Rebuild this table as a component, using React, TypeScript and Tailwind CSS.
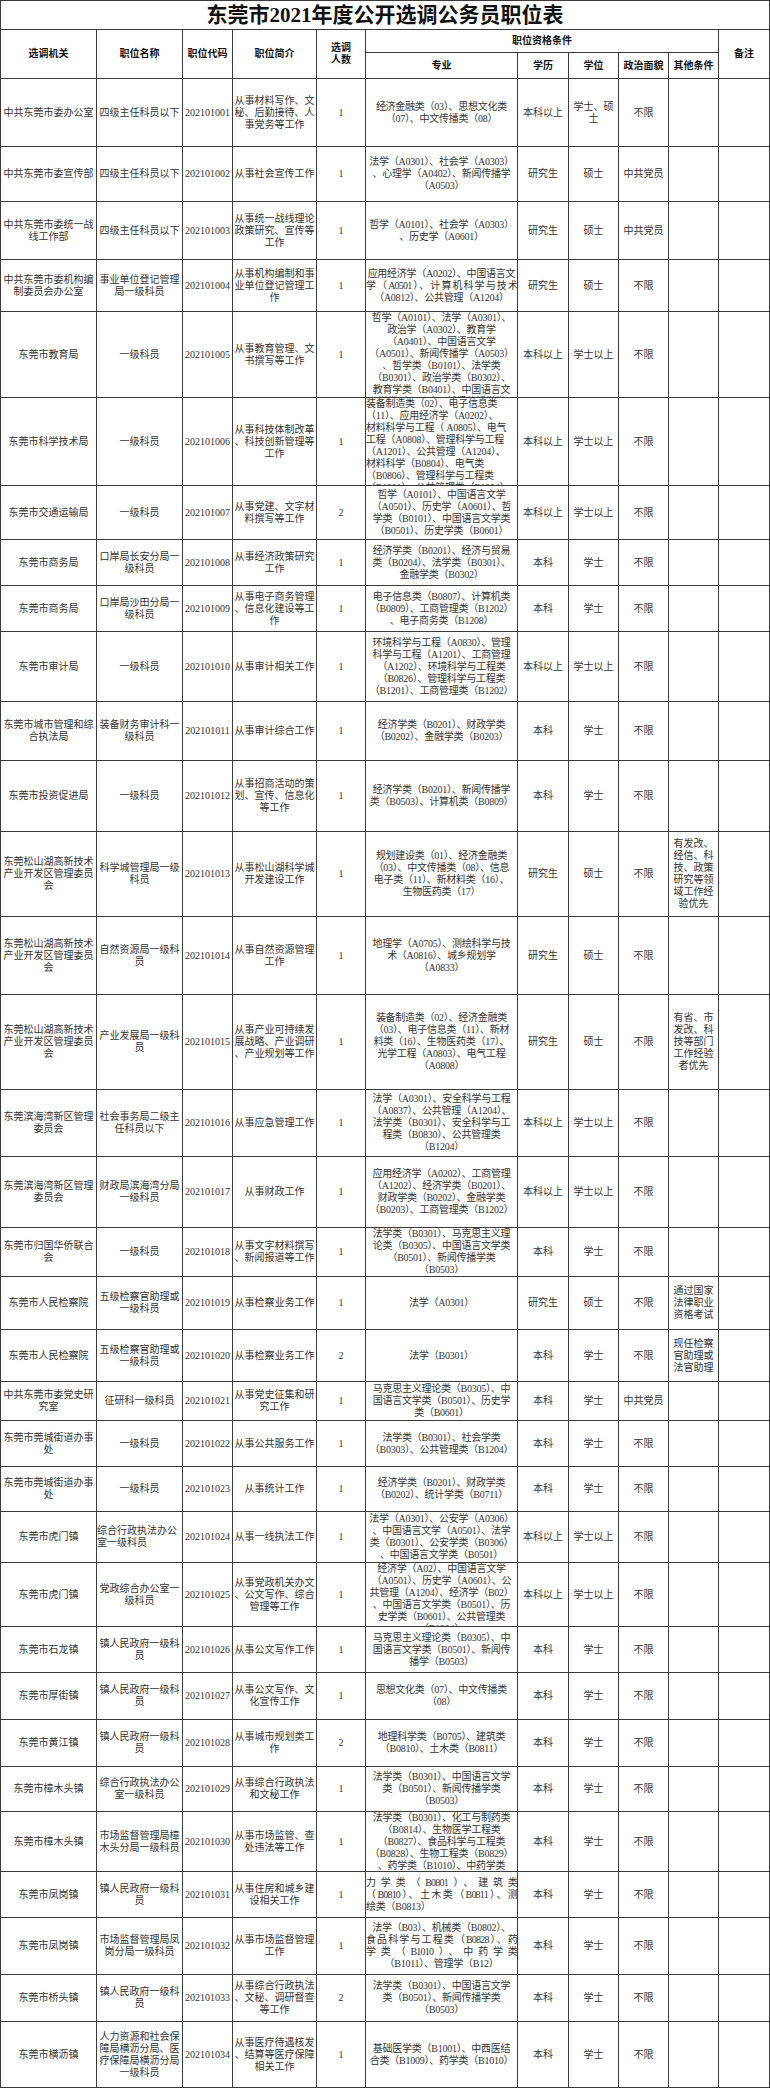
import clsx from "clsx";

const GRID =
  "grid grid-cols-[96px_86px_50px_84px_49px_152px_51px_50px_50px_50px_51px]";

type Row = { h: string; c: string[]; left?: number[] };

// "\n" splits lines, a leading "~" marks a justified line
const rows: Row[] = [
  { h: "h-[68px]", c: ["中共东莞市委办公室", "四级主任科员以下", "202101001", "从事材料写作、文\n秘、后勤接待、人\n事党务等工作", "1", "经济金融类（03）、思想文化类\n（07）、中文传播类（08）", "本科以上", "学士、硕\n士", "不限", "", ""] },
  { h: "h-[55px]", c: ["中共东莞市委宣传部", "四级主任科员以下", "202101002", "从事社会宣传工作", "1", "法学（A0301）、社会学（A0303）\n、心理学（A0402）、新闻传播学\n（A0503）", "研究生", "硕士", "中共党员", "", ""] },
  { h: "h-[58px]", c: ["中共东莞市委统一战\n线工作部", "四级主任科员以下", "202101003", "从事统一战线理论\n政策研究、宣传等\n工作", "1", "哲学（A0101）、社会学（A0303）\n、历史学（A0601）", "研究生", "硕士", "中共党员", "", ""] },
  { h: "h-[52px]", c: ["中共东莞市委机构编\n制委员会办公室", "事业单位登记管理\n局一级科员", "202101004", "从事机构编制和事\n业单位登记管理工\n作", "1", "应用经济学（A0202）、中国语言文\n~学（A0501）、计算机科学与技术\n（A0812）、公共管理（A1204）", "研究生", "硕士", "不限", "", ""] },
  { h: "h-[86px]", c: ["东莞市教育局", "一级科员", "202101005", "从事教育管理、文\n书撰写等工作", "1", "哲学（A0101）、法学（A0301）、\n政治学（A0302）、教育学\n（A0401）、中国语言文学\n（A0501）、新闻传播学（A0503）\n、哲学类（B0101）、法学类\n（B0301）、政治学类（B0302）、\n教育学类（B0401）、中国语言文\n学类（B0501）、新闻传播学类", "本科以上", "学士以上", "不限", "", ""] },
  { h: "h-[88px]", left: [5], c: ["东莞市科学技术局", "一级科员", "202101006", "从事科技体制改革\n、科技创新管理等\n工作", "1", "装备制造类（02）、电子信息类\n（11）、应用经济学（A0202）、\n材料科学与工程（ A0805）、电气\n工程（A0808）、管理科学与工程\n（A1201）、公共管理（A1204）、\n材料科学（B0804）、电气类\n（B0806）、管理科学与工程类\n（B1201）、公共管理类（B1204）", "本科以上", "学士以上", "不限", "", ""] },
  { h: "h-[54px]", c: ["东莞市交通运输局", "一级科员", "202101007", "从事党建、文字材\n料撰写等工作", "2", "哲学（A0101）、中国语言文学\n（A0501）、历史学（A0601）、哲\n学类（B0101）、中国语言文学类\n（B0501）、历史学类（B0601）", "本科以上", "学士以上", "不限", "", ""] },
  { h: "h-[46px]", c: ["东莞市商务局", "口岸局长安分局一\n级科员", "202101008", "从事经济政策研究\n工作", "1", "经济学类（B0201）、经济与贸易\n类（B0204）、法学类（B0301）、\n金融学类（B0302）", "本科", "学士", "不限", "", ""] },
  { h: "h-[46px]", c: ["东莞市商务局", "口岸局沙田分局一\n级科员", "202101009", "从事电子商务管理\n、信息化建设等工\n作", "1", "电子信息类（B0807）、计算机类\n（B0809）、工商管理类（B1202）\n、电子商务类（B1208）", "本科", "学士", "不限", "", ""] },
  { h: "h-[70px]", c: ["东莞市审计局", "一级科员", "202101010", "从事审计相关工作", "1", "环境科学与工程（A0830）、管理\n科学与工程（A1201）、工商管理\n（A1202）、环境科学与工程类\n（B0826）、管理科学与工程类\n（B1201）、工商管理类（B1202）", "本科以上", "学士以上", "不限", "", ""] },
  { h: "h-[59px]", c: ["东莞市城市管理和综\n合执法局", "装备财务审计科一\n级科员", "202101011", "从事审计综合工作", "1", "经济学类（B0201）、财政学类\n（B0202）、金融学类（B0203）", "本科", "学士", "不限", "", ""] },
  { h: "h-[71px]", c: ["东莞市投资促进局", "一级科员", "202101012", "从事招商活动的策\n划、宣传、信息化\n等工作", "1", "经济学类（B0201）、新闻传播学\n类（B0503）、计算机类（B0809）", "本科", "学士", "不限", "", ""] },
  { h: "h-[85px]", c: ["东莞松山湖高新技术\n产业开发区管理委员\n会", "科学城管理局一级\n科员", "202101013", "从事松山湖科学城\n开发建设工作", "1", "规划建设类（01）、经济金融类\n（03）、中文传播类（08）、信息\n电子类（11）、新材料类（16）、\n生物医药类（17）", "研究生", "硕士", "不限", "有发改、\n经信、科\n技、政策\n研究等领\n域工作经\n验优先", ""] },
  { h: "h-[78px]", c: ["东莞松山湖高新技术\n产业开发区管理委员\n会", "自然资源局一级科\n员", "202101014", "从事自然资源管理\n工作", "1", "地理学（A0705）、测绘科学与技\n术（A0816）、城乡规划学\n（A0833）", "研究生", "硕士", "不限", "", ""] },
  { h: "h-[95px]", c: ["东莞松山湖高新技术\n产业开发区管理委员\n会", "产业发展局一级科\n员", "202101015", "从事产业可持续发\n展战略、产业调研\n、产业规划等工作", "1", "装备制造类（02）、经济金融类\n（03）、电子信息类（11）、新材\n料类（16）、生物医药类（17）、\n光学工程（A0803）、电气工程\n（A0808）", "研究生", "硕士", "不限", "有省、市\n发改、科\n技等部门\n工作经验\n者优先", ""] },
  { h: "h-[67px]", c: ["东莞滨海湾新区管理\n委员会", "社会事务局二级主\n任科员以下", "202101016", "从事应急管理工作", "1", "法学（A0301）、安全科学与工程\n（A0837）、公共管理（A1204）、\n法学类（B0301）、安全科学与工\n程类（B0830）、公共管理类\n（B1204）", "本科以上", "学士以上", "不限", "", ""] },
  { h: "h-[71px]", c: ["东莞滨海湾新区管理\n委员会", "财政局滨海湾分局\n一级科员", "202101017", "从事财政工作", "1", "应用经济学（A0202）、工商管理\n（A1202）、经济学类（B0201）、\n财政学类（B0202）、金融学类\n（B0203）、工商管理类（B1202）", "本科以上", "学士以上", "不限", "", ""] },
  { h: "h-[49px]", c: ["东莞市归国华侨联合\n会", "一级科员", "202101018", "从事文字材料撰写\n、新闻报道等工作", "1", "法学类（B0301）、马克思主义理\n论类（B0305）、中国语言文学类\n（B0501）、新闻传播学类\n（B0503）", "本科", "学士", "不限", "", ""] },
  { h: "h-[53px]", c: ["东莞市人民检察院", "五级检察官助理或\n一级科员", "202101019", "从事检察业务工作", "1", "法学（A0301）", "研究生", "硕士", "不限", "通过国家\n法律职业\n资格考试", ""] },
  { h: "h-[52px]", c: ["东莞市人民检察院", "五级检察官助理或\n一级科员", "202101020", "从事检察业务工作", "2", "法学（B0301）", "本科", "学士", "不限", "现任检察\n官助理或\n法官助理", ""] },
  { h: "h-[39px]", c: ["中共东莞市委党史研\n究室", "征研科一级科员", "202101021", "从事党史征集和研\n究工作", "1", "马克思主义理论类（B0305）、中\n国语言文学类（B0501）、历史学\n类（B0601）", "本科", "学士", "中共党员", "", ""] },
  { h: "h-[46px]", c: ["东莞市莞城街道办事\n处", "一级科员", "202101022", "从事公共服务工作", "1", "法学类（B0301）、社会学类\n（B0303）、公共管理类（B1204）", "本科", "学士", "不限", "", ""] },
  { h: "h-[45px]", c: ["东莞市莞城街道办事\n处", "一级科员", "202101023", "从事统计工作", "1", "经济学类（B0201）、财政学类\n（B0202）、统计学类（B0711）", "本科", "学士", "不限", "", ""] },
  { h: "h-[51px]", left: [1], c: ["东莞市虎门镇", "综合行政执法办公\n室一级科员", "202101024", "从事一线执法工作", "1", "法学（A0301）、公安学（A0306）\n、中国语言文学（A0501）、法学\n类（B0301）、公安学类（B0306）\n、中国语言文学类（B0501）", "本科以上", "学士以上", "不限", "", ""] },
  { h: "h-[64px]", c: ["东莞市虎门镇", "党政综合办公室一\n级科员", "202101025", "从事党政机关办文\n、公文写作、综合\n管理等工作", "1", "经济学（A02）、中国语言文学\n（A0501）、历史学（A0601）、公\n共管理（A1204）、经济学（B02）\n、中国语言文学类（B0501）、历\n史学类（B0601）、公共管理类\n（B1204）", "本科以上", "学士以上", "不限", "", ""] },
  { h: "h-[46px]", c: ["东莞市石龙镇", "镇人民政府一级科\n员", "202101026", "从事公文写作工作", "1", "马克思主义理论类（B0305）、中\n国语言文学类（B0501）、新闻传\n播学（B0503）", "本科", "学士", "不限", "", ""] },
  { h: "h-[47px]", c: ["东莞市厚街镇", "镇人民政府一级科\n员", "202101027", "从事公文写作、文\n化宣传工作", "1", "思想文化类（07）、中文传播类\n（08）", "本科", "学士", "不限", "", ""] },
  { h: "h-[47px]", c: ["东莞市黄江镇", "镇人民政府一级科\n员", "202101028", "从事城市规划类工\n作", "2", "地理科学类（B0705）、建筑类\n（B0810）、土木类（B0811）", "本科", "学士", "不限", "", ""] },
  { h: "h-[45px]", c: ["东莞市樟木头镇", "综合行政执法办公\n室一级科员", "202101029", "从事综合行政执法\n和文秘工作", "1", "法学类（B0301）、中国语言文学\n类（B0501）、新闻传播学类\n（B0503）", "本科", "学士", "不限", "", ""] },
  { h: "h-[60px]", c: ["东莞市樟木头镇", "市场监督管理局樟\n木头分局一级科员", "202101030", "从事市场监管、查\n处违法等工作", "1", "法学类（B0301）、化工与制药类\n（B0814）、生物医学工程类\n（B0827）、食品科学与工程类\n（B0828）、生物工程类（B0829）\n、药学类（B1010）、中药学类\n（B1011）", "本科", "学士", "不限", "", ""] },
  { h: "h-[46px]", left: [5], c: ["东莞市凤岗镇", "镇人民政府一级科\n员", "202101031", "从事住房和城乡建\n设相关工作", "1", "~力学类（B0801）、建筑类\n~（B0810）、土木类（B0811）、测\n绘类（B0813）", "本科", "学士", "不限", "", ""] },
  { h: "h-[57px]", c: ["东莞市凤岗镇", "市场监督管理局凤\n岗分局一级科员", "202101032", "从事市场监督管理\n工作", "1", "法学（B03）、机械类（B0802）、\n~食品科学与工程类（B0828）、药\n~学类（B1010）、中药学类\n（B1011）、管理学（B12）", "本科", "学士", "不限", "", ""] },
  { h: "h-[47px]", c: ["东莞市桥头镇", "镇人民政府一级科\n员", "202101033", "从事综合行政执法\n、文秘、调研督查\n等工作", "2", "法学类（B0301）、中国语言文学\n类（B0501）、新闻传播学类\n（B0503）", "本科", "学士", "不限", "", ""] },
  { h: "h-[66px]", c: ["东莞市横沥镇", "人力资源和社会保\n障局横沥分局、医\n疗保障局横沥分局\n一级科员", "202101034", "从事医疗待遇核发\n、结算等医疗保障\n相关工作", "1", "基础医学类（B1001）、中西医结\n合类（B1009）、药学类（B1010）", "本科", "学士", "不限", "", ""] },
];

function Cell({ text, left, major }: { text: string; left?: boolean; major?: boolean }) {
  const lines = text ? text.split("\n") : [];
  return (
    <div
      className={clsx(
        "flex min-h-0 flex-col overflow-hidden border-r border-b border-[#3a3a3a] [justify-content:safe_center]",
        major && "tracking-[-0.25px]"
      )}
    >
      {lines.map((line, i) =>
        line.startsWith("~") ? (
          // justified line: tighter tracking so it never wraps, justify spreads it back out
          <div key={i} className="shrink-0 text-justify tracking-[-0.8px] [text-align-last:justify]">
            {line.slice(1)}
          </div>
        ) : (
          <div
            key={i}
            className={clsx(
              "flex shrink-0 whitespace-nowrap",
              left ? "justify-start" : "justify-center"
            )}
          >
            {line}
          </div>
        )
      )}
    </div>
  );
}

function HeadCell({ label, className }: { label: string; className?: string }) {
  return (
    <div
      className={clsx(
        "flex flex-col items-center justify-center border-r border-b border-[#3a3a3a] font-bold text-[#111]",
        className
      )}
    >
      {label.split("\n").map((l, i) => (
        <div key={i}>{l}</div>
      ))}
    </div>
  );
}

export default function App() {
  return (
    <div className="w-[770px] bg-white border-l border-t border-[#3a3a3a] font-['Liberation_Serif','Noto_Sans_CJK_SC',serif] text-[10px] leading-[12px] text-[#333]">
      {/* Title */}
      <div className="flex h-[29px] items-center justify-center border-r border-b border-[#3a3a3a] text-[21px] leading-none font-bold text-[#111]">
        东莞市2021年度公开选调公务员职位表
      </div>

      {/* Header: two rows */}
      <div className={clsx(GRID, "grid-rows-[23px_26px]")}>
        <HeadCell label="选调机关" className="row-span-2" />
        <HeadCell label="职位名称" className="row-span-2" />
        <HeadCell label="职位代码" className="row-span-2" />
        <HeadCell label="职位简介" className="row-span-2" />
        <HeadCell label={"选调\n人数"} className="row-span-2" />
        <HeadCell label="职位资格条件" className="col-span-5" />
        <HeadCell label="备注" className="row-span-2" />
        <HeadCell label="专业" />
        <HeadCell label="学历" />
        <HeadCell label="学位" />
        <HeadCell label="政治面貌" />
        <HeadCell label="其他条件" />
      </div>

      {/* Body rows */}
      {rows.map((row) => (
        <div key={row.c[2]} className={clsx(GRID, "grid-rows-1", row.h)}>
          {row.c.map((text, i) => (
            <Cell key={i} text={text} left={row.left?.includes(i)} major={i === 5} />
          ))}
        </div>
      ))}
    </div>
  );
}
